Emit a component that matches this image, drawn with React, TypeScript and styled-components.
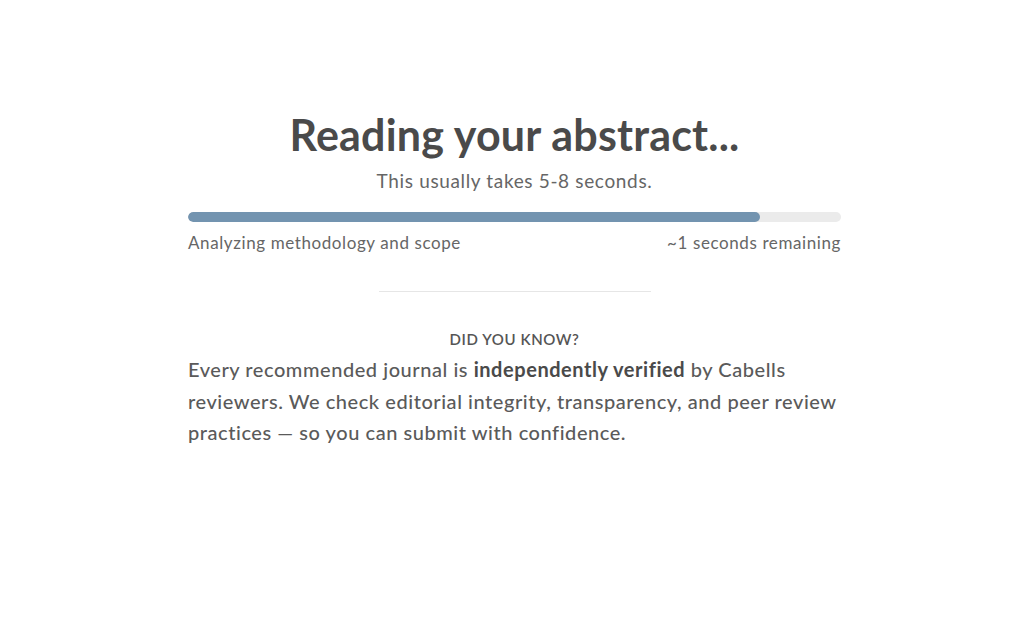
import React from 'react';
import styled, { createGlobalStyle } from 'styled-components';

const GlobalStyle = createGlobalStyle`
  html, body {
    margin: 0;
    padding: 0;
    background: #ffffff;
  }
  body {
    font-family: Lato, "Open Sans", "Liberation Sans", sans-serif;
    -webkit-font-smoothing: antialiased;
  }
`;

const Page = styled.main`
  min-height: 639px;
  display: flex;
  justify-content: center;
  padding: 110px 0 0 5px;
  box-sizing: border-box;
`;

const Panel = styled.section`
  width: 653px;
  display: flex;
  flex-direction: column;
  align-items: stretch;
`;

const Title = styled.h1`
  margin: 0;
  font-size: 43px;
  line-height: 50px;
  font-weight: 700;
  letter-spacing: 0.2px;
  color: #4a4a4a;
  text-align: center;
`;

const Subtitle = styled.p`
  margin: 9px 0 0;
  font-size: 19px;
  line-height: 24px;
  letter-spacing: 0.65px;
  color: #666666;
  text-align: center;
`;

const Track = styled.div`
  margin-top: 19px;
  height: 10px;
  border-radius: 5px;
  background: #ebebeb;
  overflow: hidden;
`;

const Fill = styled.div`
  height: 100%;
  border-radius: 5px;
  background: #7394b0;
`;

const StatusRow = styled.div`
  margin-top: 10px;
  display: flex;
  justify-content: space-between;
  font-size: 17px;
  line-height: 22px;
  letter-spacing: 0.6px;
  color: #666666;
`;

const Divider = styled.hr`
  width: 272px;
  margin: 37px auto 0;
  border: none;
  border-top: 1px solid #e6e6e6;
`;

const Eyebrow = styled.h2`
  margin: 37px 0 0;
  font-size: 15px;
  line-height: 20px;
  font-weight: 600;
  letter-spacing: 0.6px;
  text-transform: uppercase;
  color: #555555;
  text-align: center;
`;

const Tip = styled.p`
  margin: 5px 0 0;
  font-size: 20px;
  line-height: 31.5px;
  font-weight: 500;
  letter-spacing: 0.55px;
  color: #5a5a5a;

  strong {
    font-weight: 700;
    color: #4a4a4a;
  }
`;

const progress = 0.876;

export default function App() {
  return (
    <>
      <GlobalStyle />
      <Page>
        <Panel>
          <Title>Reading your abstract...</Title>
          <Subtitle>This usually takes 5-8 seconds.</Subtitle>
          <Track>
            <Fill style={{ width: `${progress * 100}%` }} />
          </Track>
          <StatusRow>
            <span>Analyzing methodology and scope</span>
            <span>~1 seconds remaining</span>
          </StatusRow>
          <Divider />
          <Eyebrow>Did you know?</Eyebrow>
          <Tip>
            Every recommended journal is <strong>independently verified</strong> by Cabells
            reviewers. We check editorial integrity, transparency, and peer review
            practices — so you can submit with confidence.
          </Tip>
        </Panel>
      </Page>
    </>
  );
}
